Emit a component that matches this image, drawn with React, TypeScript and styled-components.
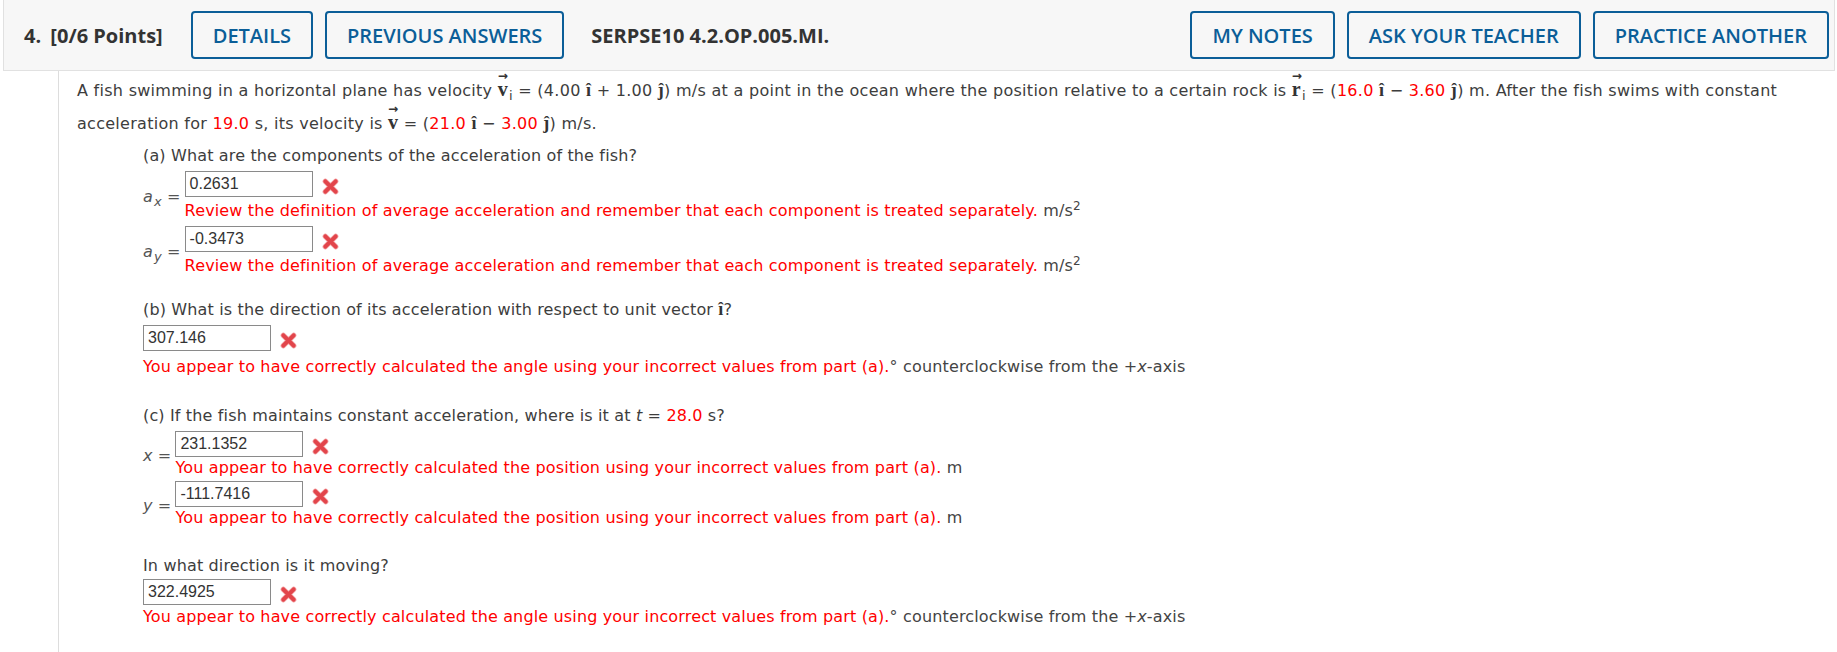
import React from "react";
import styled, { createGlobalStyle } from "styled-components";

const GlobalStyle = createGlobalStyle`
  html, body {
    margin: 0;
    padding: 0;
    background: #ffffff;
  }
  body {
    font-family: "DejaVu Sans", Verdana, sans-serif;
    color: #3d3d3d;
  }
`;

interface Answer {
  label?: React.ReactNode;
  value: string;
  feedback: string;
  unit: React.ReactNode;
}

const accelFeedback =
  "Review the definition of average acceleration and remember that each component is treated separately.";
const angleFeedback =
  "You appear to have correctly calculated the angle using your incorrect values from part (a).";
const posFeedback =
  "You appear to have correctly calculated the position using your incorrect values from part (a).";

// built lazily, the styled parts below are not defined yet at module load
function accelAnswers(): Answer[] {
  const unit = (
    <>
      {" "}m/s<sup>2</sup>
    </>
  );
  return [
    {
      label: (
        <>
          <Ital>a</Ital>
          <Sub>x</Sub> =
        </>
      ),
      value: "0.2631",
      feedback: accelFeedback,
      unit,
    },
    {
      label: (
        <>
          <Ital>a</Ital>
          <Sub>y</Sub> =
        </>
      ),
      value: "-0.3473",
      feedback: accelFeedback,
      unit,
    },
  ];
}

function AngleUnit() {
  return (
    <>
      ° counterclockwise from the +<Ital>x</Ital>-axis
    </>
  );
}

function XMark() {
  return (
    <Cross viewBox="0 0 18 18" aria-hidden>
      <path
        d="M3.5 3.5 L14.5 14.5 M14.5 3.5 L3.5 14.5"
        stroke="#f29a9d"
        strokeWidth="5.6"
        strokeLinecap="round"
      />
      <path
        d="M3.5 3.5 L14.5 14.5 M14.5 3.5 L3.5 14.5"
        stroke="#e2454b"
        strokeWidth="4"
        strokeLinecap="round"
      />
    </Cross>
  );
}

function Vec({ sym, sub }: { sym: string; sub?: string }) {
  return (
    <>
      <VecSym>
        <VecArrow>→</VecArrow>
        {sym}
      </VecSym>
      {sub ? <VecSub>{sub}</VecSub> : null}
    </>
  );
}

function AnswerField({ a, gap = 0 }: { a: Answer; gap?: number }) {
  return (
    <AnswerRow>
      {a.label ? <VarLabel>{a.label}</VarLabel> : null}
      <AnswerBody $gap={gap}>
        <InputLine>
          <Box>{a.value}</Box>
          <XMark />
        </InputLine>
        <Feedback>
          <Wrong>{a.feedback}</Wrong>
          {a.unit}
        </Feedback>
      </AnswerBody>
    </AnswerRow>
  );
}

export default function App() {
  return (
    <>
      <GlobalStyle />
      <Header>
        <Points>
          4.<Gap /> [0/6 Points]
        </Points>
        <HeadButton>DETAILS</HeadButton>
        <HeadButton>PREVIOUS ANSWERS</HeadButton>
        <Code>SERPSE10 4.2.OP.005.MI.</Code>
        <RightGroup>
          <HeadButton>MY NOTES</HeadButton>
          <HeadButton>ASK YOUR TEACHER</HeadButton>
          <HeadButton>PRACTICE ANOTHER</HeadButton>
        </RightGroup>
      </Header>

      <Main>
        <Intro>
          A fish swimming in a horizontal plane has velocity <Vec sym="v" sub="i" /> = (4.00{" "}
          <Hat>î</Hat> + 1.00 <Hat>ĵ</Hat>) m/s at a point in the ocean where the position relative
          to a certain rock is <Vec sym="r" sub="i" /> = (<Red>16.0</Red> <Hat>î</Hat> −{" "}
          <Red>3.60</Red> <Hat>ĵ</Hat>) m. After the fish swims with constant acceleration for{" "}
          <Red>19.0</Red> s, its velocity is <Vec sym="v" /> = (<Red>21.0</Red> <Hat>î</Hat> −{" "}
          <Red>3.00</Red> <Hat>ĵ</Hat>) m/s.
        </Intro>

        <Part>
          <Prompt>(a) What are the components of the acceleration of the fish?</Prompt>
          <Stack>
            {accelAnswers().map((a, i) => (
              <AnswerField key={i} a={a} gap={3} />
            ))}
          </Stack>
        </Part>

        <Part $top={20}>
          <Prompt>
            (b) What is the direction of its acceleration with respect to unit vector{" "}
            <Hat>î</Hat>?
          </Prompt>
          <AnswerBody $gap={5}>
            <InputLine>
              <Box>307.146</Box>
              <XMark />
            </InputLine>
            <Feedback>
              <Wrong>{angleFeedback}</Wrong>
              <AngleUnit />
            </Feedback>
          </AnswerBody>
        </Part>

        <Part $top={26}>
          <Prompt>
            (c) If the fish maintains constant acceleration, where is it at <Ital>t</Ital> ={" "}
            <Red>28.0</Red> s?
          </Prompt>
          <Stack $gap={2}>
            <AnswerField
              a={{ label: <><Ital>x</Ital> =</>, value: "231.1352", feedback: posFeedback, unit: " m" }}
            />
            <AnswerField
              a={{ label: <><Ital>y</Ital> =</>, value: "-111.7416", feedback: posFeedback, unit: " m" }}
            />
          </Stack>
        </Part>

        <Part $top={25}>
          <Prompt $below={1}>In what direction is it moving?</Prompt>
          <AnswerBody $gap={1}>
            <InputLine>
              <Box>322.4925</Box>
              <XMark />
            </InputLine>
            <Feedback>
              <Wrong>{angleFeedback}</Wrong>
              <AngleUnit />
            </Feedback>
          </AnswerBody>
        </Part>
      </Main>
    </>
  );
}

const Header = styled.header`
  display: flex;
  align-items: center;
  gap: 12px;
  height: 70px;
  margin: 0 2px 0 3px;
  padding: 0 5px 0 20px;
  background: #f7f7f7;
  border: 1px solid #e1e1e1;
  border-top: none;
  font-family: "Open Sans", "Noto Sans", sans-serif;
`;

const Points = styled.div`
  font-size: 20px;
  font-weight: 700;
  color: #333333;
  margin-right: 16px;
`;

const Gap = styled.span`
  display: inline-block;
  width: 4px;
`;

const HeadButton = styled.button`
  height: 48px;
  padding: 0 20px;
  border: 2px solid #0b5e98;
  border-radius: 4px;
  background: transparent;
  color: #0b5e98;
  font-family: "Open Sans", "Noto Sans", sans-serif;
  font-size: 20px;
  font-weight: 600;
  cursor: pointer;
`;

const Code = styled.div`
  margin-left: 15px;
  font-size: 20px;
  font-weight: 700;
  color: #333333;
`;

const RightGroup = styled.div`
  display: flex;
  gap: 12px;
  margin-left: auto;
`;

const Main = styled.main`
  margin-left: 58px;
  min-height: 580px;
  padding: 3px 20px 0 18px;
  border-left: 1px solid #dddddd;
  font-size: 16px;
  letter-spacing: 0.15px;
`;

const Intro = styled.p`
  margin: 0;
  line-height: 32px;
  letter-spacing: 0.28px;
`;

const Part = styled.section<{ $top?: number }>`
  margin-left: 66px;
  margin-top: ${(p) => p.$top ?? 4}px;
`;

const Prompt = styled.div<{ $below?: number }>`
  line-height: 24px;
  margin-bottom: ${(p) => p.$below ?? 3}px;
`;

const Stack = styled.div<{ $gap?: number }>`
  display: flex;
  flex-direction: column;
  gap: ${(p) => p.$gap ?? 4}px;
`;

const AnswerRow = styled.div`
  display: flex;
  align-items: center;
`;

const VarLabel = styled.div`
  color: #555555;
  padding-right: 4px;
  white-space: nowrap;
`;

const AnswerBody = styled.div<{ $gap?: number }>`
  display: flex;
  flex-direction: column;
  gap: ${(p) => p.$gap ?? 0}px;
`;

const InputLine = styled.div`
  display: flex;
  align-items: center;
  gap: 9px;
`;

const Box = styled.div`
  box-sizing: border-box;
  width: 128px;
  height: 26px;
  padding: 2px 3px 0 4px;
  border: 1px solid #8a8a8a;
  background: #ffffff;
  font-family: "Liberation Sans", Arial, sans-serif;
  font-size: 16px;
  line-height: 20px;
  letter-spacing: 0;
  color: #333333;
`;

const Cross = styled.svg`
  width: 17px;
  height: 17px;
  margin-top: 4px;
`;

const Feedback = styled.div`
  line-height: 22px;
  color: #444444;
  sup {
    font-size: 12px;
    line-height: 0;
  }
`;

const Wrong = styled.span`
  color: #ff0000;
`;

const Red = styled.span`
  color: #ff0000;
`;

const Ital = styled.i`
  font-style: italic;
`;

const Sub = styled.sub`
  font-size: 13px;
  line-height: 0;
  font-style: italic;
  margin-left: 1px;
`;

const Hat = styled.b`
  font-family: "Liberation Serif", "DejaVu Serif", serif;
  font-weight: 700;
  font-size: 18px;
  color: #333333;
`;

const VecSym = styled.b`
  position: relative;
  display: inline-block;
  font-family: "Liberation Serif", "DejaVu Serif", serif;
  font-weight: 700;
  font-size: 20px;
  line-height: 1;
  color: #333333;
`;

const VecArrow = styled.span`
  position: absolute;
  left: 0;
  right: 0;
  top: -9px;
  text-align: center;
  font-family: "DejaVu Sans", sans-serif;
  font-size: 12px;
  font-weight: 700;
`;

const VecSub = styled.sub`
  font-size: 13px;
  line-height: 0;
  margin-left: 1px;
`;
